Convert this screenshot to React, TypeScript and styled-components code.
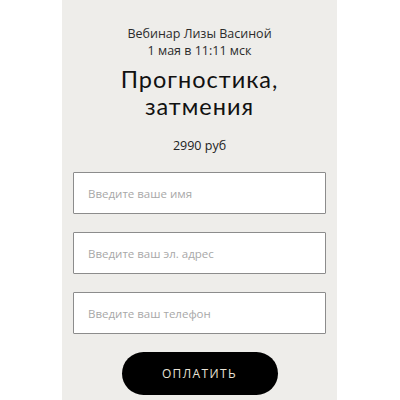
import styled, { createGlobalStyle } from 'styled-components'

const Global = createGlobalStyle`
  html, body {
    margin: 0;
    padding: 0;
    background: #ffffff;
  }
  * {
    box-sizing: border-box;
  }
`

const Panel = styled.div`
  margin-left: 62px;
  width: 275px;
  height: 400px;
  overflow: hidden;
  background: #eeedea;
  padding: 25px 11px 0;
  display: flex;
  flex-direction: column;
  align-items: center;
  font-family: 'Open Sans', 'Noto Sans', sans-serif;
  color: #222;
`

const Subtitle = styled.div`
  font-size: 12.5px;
  line-height: 17px;
  text-align: center;
  color: #2b2b2b;
`

const Title = styled.h1`
  margin: 7px 0 0;
  font-family: Lato, 'Open Sans', sans-serif;
  font-weight: 400;
  font-size: 23.5px;
  line-height: 27px;
  letter-spacing: 1px;
  text-align: center;
  color: #111;
`

const Price = styled.div`
  margin-top: 17px;
  font-size: 12.5px;
  line-height: 17px;
  color: #222;
`

const Form = styled.form`
  width: 100%;
  margin-top: 18px;
  display: flex;
  flex-direction: column;
  align-items: center;
  gap: 18px;
`

const Field = styled.input`
  width: 100%;
  height: 42px;
  border: 1px solid #8c8c8c;
  border-radius: 1px;
  background: #fff;
  padding: 0 14px;
  font-family: inherit;
  font-size: 11.5px;
  outline: none;
  &::placeholder {
    color: #a8a8a8;
  }
`

const PayButton = styled.button`
  width: 156px;
  height: 43px;
  border: none;
  border-radius: 22px;
  background: #000;
  color: #e8e2d6;
  font-family: inherit;
  font-size: 12px;
  letter-spacing: 1.4px;
  cursor: pointer;
`

const fields = ['Введите ваше имя', 'Введите ваш эл. адрес', 'Введите ваш телефон']

export default function App() {
  return (
    <>
      <Global />
      <Panel>
        <Subtitle>Вебинар Лизы Васиной</Subtitle>
        <Subtitle>1 мая в 11:11 мск</Subtitle>
        <Title>
          Прогностика,
          <br />
          затмения
        </Title>
        <Price>2990 руб</Price>
        <Form onSubmit={(e) => e.preventDefault()}>
          {fields.map((f) => (
            <Field key={f} placeholder={f} />
          ))}
          <PayButton type="submit">ОПЛАТИТЬ</PayButton>
        </Form>
      </Panel>
    </>
  )
}
